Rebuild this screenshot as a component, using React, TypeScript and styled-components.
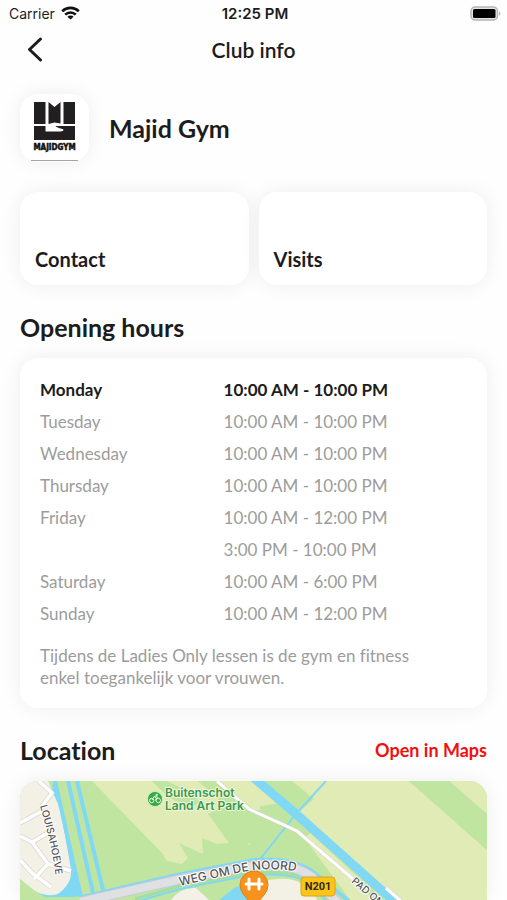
import React from "react";
import styled, { createGlobalStyle } from "styled-components";

const GlobalStyle = createGlobalStyle`
  *, *::before, *::after { box-sizing: border-box; }
  body {
    margin: 0;
    background: #fefefe;
    color: #1c1c1c;
    font-family: Lato, "Open Sans", sans-serif;
    font-variant-ligatures: no-common-ligatures;
  }
  h1, h2, p { margin: 0; }
  button { font: inherit; color: inherit; border: 0; cursor: pointer; }
`;

const softShadow = "0 0 20px rgba(0, 0, 0, 0.07)";

const Screen = styled.div`
  min-height: 100vh;
  display: flex;
  flex-direction: column;
  overflow: hidden;
`;

const StatusBar = styled.div`
  display: grid;
  grid-template-columns: 1fr auto 1fr;
  align-items: center;
  height: 26px;
  padding: 0 6px 0 9px;
  font-family: Inter, sans-serif;
  font-size: 14px;
`;

const Carrier = styled.span`
  display: flex;
  align-items: center;
  gap: 6px;
`;

const Clock = styled.span`
  font-size: 15px;
  font-weight: 600;
`;

const BatterySlot = styled.span`
  display: flex;
  justify-content: flex-end;
`;

const NavBar = styled.header`
  display: grid;
  grid-template-columns: 40px 1fr 40px;
  align-items: center;
  height: 48px;
  padding: 0 15px;
`;

const BackButton = styled.button`
  display: grid;
  place-items: center;
  width: 40px;
  height: 44px;
  padding: 0;
  background: none;
`;

const NavTitle = styled.h1`
  text-align: center;
  font-size: 21px;
  line-height: 28px;
  font-weight: 600;
`;

const Content = styled.main`
  display: flex;
  flex: 1;
  flex-direction: column;
  padding: 20px 20px 0;
`;

const ClubHeader = styled.section`
  display: flex;
  align-items: center;
  gap: 20px;
`;

const LogoTile = styled.div`
  width: 69px;
  height: 68px;
  border-radius: 18px;
  background: #fff;
  box-shadow: ${softShadow};
`;

const Heading = styled.h2`
  font-size: 25px;
  line-height: 32px;
  font-weight: 700;
`;

const Tiles = styled.nav`
  display: grid;
  grid-template-columns: 1fr 1fr;
  gap: 10px;
  margin-top: 30px;
`;

const Tile = styled.button`
  display: flex;
  align-items: flex-end;
  height: 93px;
  padding: 0 15px 14px;
  border-radius: 18px;
  background: #fff;
  box-shadow: ${softShadow};
  font-size: 20px;
  line-height: 24px;
  font-weight: 700;
`;

const SectionHead = styled.div`
  display: flex;
  align-items: center;
  justify-content: space-between;
  margin: 26px 0 15px;
`;

const MapsLink = styled.a`
  color: #f2100f;
  font-size: 18px;
  line-height: 24px;
  font-weight: 700;
  text-decoration: none;
`;

const HoursCard = styled.section`
  padding: 15px 20px 19px;
  border-radius: 18px;
  background: #fff;
  box-shadow: ${softShadow};
  font-size: 17px;
  color: #9c9c9c;
`;

const HoursTable = styled.table`
  width: 100%;
  border-collapse: collapse;
  table-layout: fixed;
`;

const HoursRow = styled.tr<{ $today?: boolean }>`
  height: 32px;
  color: ${({ $today }) => ($today ? "#1c1c1c" : "inherit")};
  font-weight: ${({ $today }) => ($today ? 700 : 400)};
`;

const Day = styled.th`
  width: 43%;
  padding: 0;
  text-align: left;
  font-weight: inherit;
`;

const Time = styled.td`
  padding: 0;
`;

const Note = styled.p`
  margin-top: 16px;
  padding-right: 30px;
  line-height: 22px;
`;

const MapCard = styled.div`
  flex: 1;
  display: flex;
  min-height: 119px;
  border-radius: 18px 18px 0 0;
  box-shadow: ${softShadow};
  overflow: hidden;
`;

const hours: { day: string; time: string; today?: boolean }[] = [
  { day: "Monday", time: "10:00 AM - 10:00 PM", today: true },
  { day: "Tuesday", time: "10:00 AM - 10:00 PM" },
  { day: "Wednesday", time: "10:00 AM - 10:00 PM" },
  { day: "Thursday", time: "10:00 AM - 10:00 PM" },
  { day: "Friday", time: "10:00 AM - 12:00 PM" },
  { day: "", time: "3:00 PM - 10:00 PM" },
  { day: "Saturday", time: "10:00 AM - 6:00 PM" },
  { day: "Sunday", time: "10:00 AM - 12:00 PM" },
];

const WifiIcon = () => (
  <svg width="19" height="14" viewBox="0 0 19 14" aria-hidden="true" fill="none" stroke="#111" strokeWidth="2.6">
    <path d="M1.200 5.200a12 12 0 0 1 16.600 0" />
    <path d="M4.200 8.600a7.600 7.600 0 0 1 10.600 0" />
    <path d="M9.500 13.600 6.400 10.700a4.400 4.400 0 0 1 6.200 0z" fill="#111" stroke="none" />
  </svg>
);

const BatteryIcon = () => (
  <svg width="31" height="15" viewBox="0 0 31 15" aria-hidden="true">
    <rect x="1" y="1" width="26.500" height="13" rx="4" fill="#e4e4e4" stroke="#b4b4b4" strokeWidth="1.400" />
    <rect x="3" y="3" width="22.500" height="9" rx="1.500" fill="#000" />
    <path d="M29 5.200v4.600c1.800-.9 1.800-3.700 0-4.600z" fill="#b4b4b4" />
  </svg>
);

const ChevronIcon = () => (
  <svg width="16" height="26" viewBox="0 0 16 26" aria-hidden="true">
    <path d="M13.500 2 2.500 12.500l11 10.500" fill="none" stroke="#1c1c1c" strokeWidth="3" strokeLinecap="round" strokeLinejoin="round" />
  </svg>
);

const ClubLogo = () => (
  <svg width="69" height="68" viewBox="0 0 69 68" role="img" aria-label="Majid Gym logo">
    <g fill="#211f1f">
      <path d="M14 8h11.500v22H14z" />
      <path d="M28.500 8l6 5L40.500 8v21.500l-6-1-6 1.500z" />
      <path d="M43.500 8H55v22H43.500z" />
      <path d="M14 32h11.500v5.500H38c3 0 5.500-.2 5.500-1.500 0-1.500-5.500-1.300-8-4h19.500v14H14z" />
    </g>
    <text x="34.500" y="56" textAnchor="middle" fontFamily="DejaVu Sans Condensed, sans-serif" fontSize="8" fontWeight="700" fill="#111" stroke="#111" strokeWidth=".5">
      MAJIDGYM
    </text>
    <path d="M11 66.500h47" stroke="#a5a5a5" />
  </svg>
);

const AreaMap = () => (
  <svg width="100%" height="100%" viewBox="0 0 467 119" preserveAspectRatio="xMidYMin slice" role="img" aria-label="Map around Majid Gym">
    <defs>
      <path id="street-louisa" d="M20 25C26 46 33 70 36 98" />
      <path id="street-weg" d="M160 105L213 93Q248 84 285 92" />
      <path id="street-pad" d="M331 101L366 131" />
    </defs>
    <rect width="467" height="120" fill="#c0e5a1" />

    <g fill="#e0ebb5">
      <path d="M72 0H132L145 13L151 10L147 0H244L276 33L294 18L272 0H389L467 69V120H374L262 22L240 25V60L205 25L188 33L209 62L197 63L182 57L183 73L159 62L168 77L162 83L147 80L142 72Z" />
      <path d="M429 0H467V33Z" />
      <path d="M284 58L290 52L340 98L352 120H331Z" />
      <path d="M234 43L240 55L236 63L228 64Z" />
    </g>
    <g fill="#c0e5a1">
      <path d="M132 0H147L167 10L180 21L172 27L150 17Z" />
      <path d="M178 0H197L234 31V66L188 33L206 25Z" />
      <path d="M234 30L262 26L290 52L284 58L291 66L331 120H234Z" />
      <path d="M389 0H429L467 33V69Z" />
    </g>

    <path d="M33 0L60 115L30 120L0 98V80L45 85L32 12Z" fill="#80d8f5" />
    <path d="M0 105L25 116H57L60 120H0Z" fill="#c0e5a1" />
    <path d="M0 0H28L33 12L40 27L51 88Q52 97 47 104Q40 114 33 114Q22 115 14 109L0 98Z" fill="#f3f1e6" />
    <g fill="none" stroke="#80d8f5" strokeWidth="4">
      <path d="M35 0L61 116" />
      <path d="M48 0L73 112" />
      <path d="M57 0L83 109" />
    </g>

    <g fill="none" stroke="#d9d7cf" strokeWidth="5" strokeLinejoin="round">
      <path d="M19 0L32 12L22 25V30L0 42M0 55L12 61L28 83L51 90M12 61L28 52M28 83L14 98M0 79L12 92L31 106" />
    </g>
    <g fill="none" stroke="#fff" strokeWidth="3.500" strokeLinejoin="round">
      <path d="M19 0L32 12L22 25V30L0 42M0 55L12 61L28 83L51 90M12 61L28 52M28 83L14 98M0 79L12 92L31 106" />
    </g>

    <path d="M150 120Q160 106 176 107L190 120Z" fill="#f3f1e6" />
    <path d="M218 120Q232 96 268 98Q286 100 298 120Z" fill="#f3f1e6" />
    <path d="M198 120L214 107L222 104L236 120Z" fill="#80d8f5" />
    <path d="M115 121L160 108L220 96Q275 88 294 106L306 120" fill="none" stroke="#80d8f5" strokeWidth="2" />
    <path d="M115 118L160 105L220 94Q275 86 296 104L310 120" fill="none" stroke="#a3dca4" strokeWidth="3" />
    <path d="M62 116L157 94L234 79Q274 76 296 93L331 122" fill="none" stroke="#80d8f5" strokeWidth="4" />
    <path d="M60 121L157 99L220 87Q268 78 292 96L318 122" fill="none" stroke="#c8cbd0" strokeWidth="10" />
    <path d="M60 121L157 99L220 87Q268 78 292 96L318 122" fill="none" stroke="#dfe0e4" strokeWidth="8" />

    <path d="M306 0L276 33L241 77" fill="none" stroke="#80d8f5" strokeWidth="2" />
    <path d="M234 -3L276 33L376 122" fill="none" stroke="#80d8f5" strokeWidth="9" />
    <g fill="none" stroke="#d1d4c6" strokeWidth="4">
      <path d="M197 0L229 28L277 50L333 98M366 107L382 121" />
    </g>
    <g fill="none" stroke="#fff" strokeWidth="3">
      <path d="M197 0L229 28L277 50L333 98M366 107L382 121" />
    </g>

    <g fontFamily="Inter, sans-serif" fontWeight="500" fill="#55565a" stroke="#fff" strokeWidth="2" strokeLinejoin="round" paintOrder="stroke">
      <text fontSize="10">
        <textPath href="#street-louisa">LOUISAHOEVE</textPath>
      </text>
      <text fontSize="12">
        <textPath href="#street-weg">WEG OM DE NOORD</textPath>
      </text>
      <text fontSize="10">
        <textPath href="#street-pad">PAD OM</textPath>
      </text>
    </g>

    <circle cx="135" cy="18" r="7.500" fill="#35ab45" stroke="#dff0c4" strokeWidth=".8" />
    <g fill="none" stroke="#e9f7e4" strokeWidth="1">
      <circle cx="131.700" cy="19.500" r="2.200" />
      <circle cx="138.300" cy="19.500" r="2.200" />
      <path d="M132 19l2-3.500 2.500 1.500-1 2.500M134 15.500l2.500-.5 1.500 2" />
    </g>
    <circle cx="136.800" cy="13.800" r="1.100" fill="#e9f7e4" />
    <g fontFamily="Inter, sans-serif" fontSize="12" fontWeight="600" fill="#3a9a4c" stroke="#f0f6dc" strokeWidth="2" strokeLinejoin="round" paintOrder="stroke">
      <text x="145" y="16">Buitenschot</text>
      <text x="145" y="29">Land Art Park</text>
    </g>

    <rect x="281" y="96" width="34" height="19" rx="3" fill="#fcc419" stroke="#d9a520" />
    <text x="298" y="109" textAnchor="middle" fontFamily="Roboto, sans-serif" fontSize="11" fontWeight="700" fill="#2e2a1c">
      N201
    </text>

    <path d="M234 126L224 114Q220 109 220 104A14 14 0 0 1 248 104Q248 109 244 114Z" fill="#f7931c" stroke="#e2820f" />
    <path d="M226 103H242M229 98V108M239 98V108" stroke="#fff" strokeWidth="3" strokeLinecap="round" fill="none" />
  </svg>
);

export default function App() {
  return (
    <>
      <GlobalStyle />
      <Screen>
        <StatusBar>
          <Carrier>
            Carrier
            <WifiIcon />
          </Carrier>
          <Clock>12:25 PM</Clock>
          <BatterySlot>
            <BatteryIcon />
          </BatterySlot>
        </StatusBar>
        <NavBar>
          <BackButton type="button" aria-label="Back">
            <ChevronIcon />
          </BackButton>
          <NavTitle>Club info</NavTitle>
        </NavBar>
        <Content>
          <ClubHeader>
            <LogoTile>
              <ClubLogo />
            </LogoTile>
            <Heading>Majid Gym</Heading>
          </ClubHeader>
          <Tiles>
            <Tile type="button">Contact</Tile>
            <Tile type="button">Visits</Tile>
          </Tiles>
          <SectionHead>
            <Heading>Opening hours</Heading>
          </SectionHead>
          <HoursCard>
            <HoursTable>
              <tbody>
                {hours.map(({ day, time, today }) => (
                  <HoursRow key={day + time} $today={today}>
                    <Day scope="row">{day}</Day>
                    <Time>{time}</Time>
                  </HoursRow>
                ))}
              </tbody>
            </HoursTable>
            <Note>Tijdens de Ladies Only lessen is de gym en fitness enkel toegankelijk voor vrouwen.</Note>
          </HoursCard>
          <SectionHead>
            <Heading>Location</Heading>
            <MapsLink href="#maps">Open in Maps</MapsLink>
          </SectionHead>
          <MapCard>
            <AreaMap />
          </MapCard>
        </Content>
      </Screen>
    </>
  );
}
